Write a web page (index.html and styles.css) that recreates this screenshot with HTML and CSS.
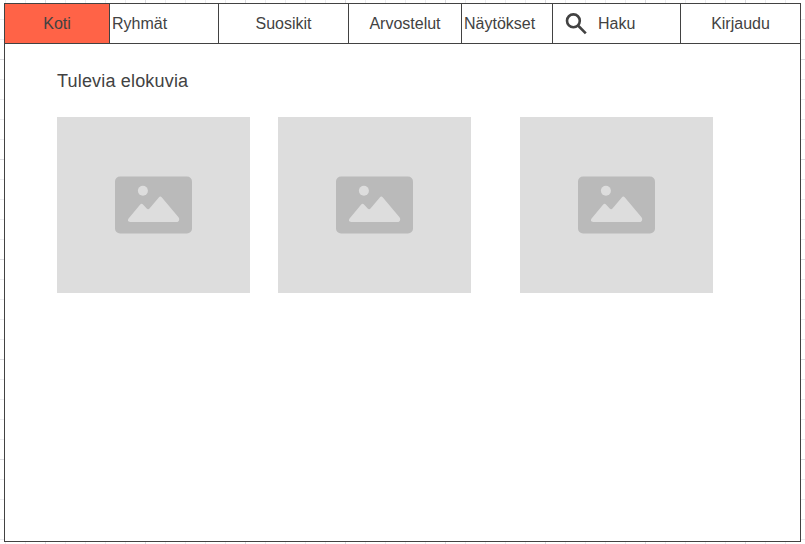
FILE: index.html
```html
<!DOCTYPE html>
<html lang="fi">
<head>
<meta charset="utf-8">
<title>Tulevia elokuvia</title>
<link rel="stylesheet" href="styles.css">
</head>
<body>
<svg class="defs" width="0" height="0">
  <symbol id="picture" viewBox="0 -0.5 77 58">
    <rect width="77" height="57" rx="5" fill="#bababa"/>
    <circle cx="27.9" cy="14.2" r="5" fill="#ddd"/>
    <path d="M14.2 41.2 25.2 28.1Q26.5 26.3 28 28L31.7 32Q33.2 33.5 34.7 31.8L43.8 21Q45.3 19.2 46.9 21L63.3 40.4C65 42.6 64.3 45.4 61.6 45.4H15.4C12.8 45.4 12.2 43.4 14.2 41.2Z" fill="#ddd"/>
  </symbol>
</svg>
<div class="window">
  <nav class="nav">
    <a class="tab active">Koti</a>
    <a class="tab left">Ryhmät</a>
    <a class="tab">Suosikit</a>
    <a class="tab">Arvostelut</a>
    <a class="tab left">Näytökset</a>
    <a class="tab search">
      <svg class="glass" viewBox="0 0 22 22"><circle cx="8.4" cy="7.8" r="6.4"/><path d="M13 12.5 20.8 20.3"/></svg>
      <span>Haku</span>
    </a>
    <a class="tab">Kirjaudu</a>
  </nav>
  <main class="content">
    <h1 class="title">Tulevia elokuvia</h1>
    <div class="movies">
      <div class="poster"><svg class="picture"><use href="#picture"/></svg></div>
      <div class="poster"><svg class="picture"><use href="#picture"/></svg></div>
      <div class="poster"><svg class="picture"><use href="#picture"/></svg></div>
    </div>
  </main>
</div>
</body>
</html>
```
FILE: styles.css
```css
* { box-sizing: border-box; }
body {
  margin: 0;
  padding: 3px 4px 2px;
  height: 544px;
  overflow: hidden;
  font-family: "Liberation Sans", Arial, sans-serif;
  color: #424242;
  background-color: #fff;
  background-image:
    linear-gradient(90deg, #dcdce0 1px, transparent 1px),
    linear-gradient(#dcdce0 1px, transparent 1px),
    linear-gradient(90deg, #ececef 1px, transparent 1px),
    linear-gradient(#ececef 1px, transparent 1px);
  background-size: 100px 100px, 100px 100px, 20px 20px, 20px 20px;
  background-position: 45px 59px, 45px 59px, 5px 19px, 5px 19px;
}
.defs { position: absolute; }
.window {
  width: 797px;
  height: 539px;
  border: 1px solid #424242;
  background: #fff;
}
.nav {
  display: grid;
  grid-template-columns: 105px 109px 130px 113px 91px 128px 119px;
  height: 40px;
  border-bottom: 1px solid #424242;
}
.tab {
  display: flex;
  align-items: center;
  justify-content: center;
  padding-top: 1px;
  border-right: 1px solid #424242;
  font-size: 16px;
  line-height: 18px;
}
.tab:last-child { border-right: 0; }
.active { background: #ff6347; }
.left { justify-content: flex-start; padding-left: 2px; }
.search { justify-content: flex-start; padding-left: 12px; gap: 11px; }
.glass {
  width: 22px;
  height: 22px;
  fill: none;
  stroke: #424242;
  stroke-width: 2.6;
}
.content { padding: 27px 0 0 52px; }
.title {
  margin: 0 0 25px;
  font-size: 18px;
  line-height: 21px;
  letter-spacing: 0.18px;
  font-weight: 400;
}
.movies {
  display: grid;
  grid-template-columns: 193px 193px 193px;
  column-gap: 28px;
}
.poster {
  display: flex;
  align-items: center;
  justify-content: center;
  height: 176px;
  background: #ddd;
}
.poster:last-child { margin: 0 -21px 0 21px; }
.picture { width: 77px; height: 58px; }
```
